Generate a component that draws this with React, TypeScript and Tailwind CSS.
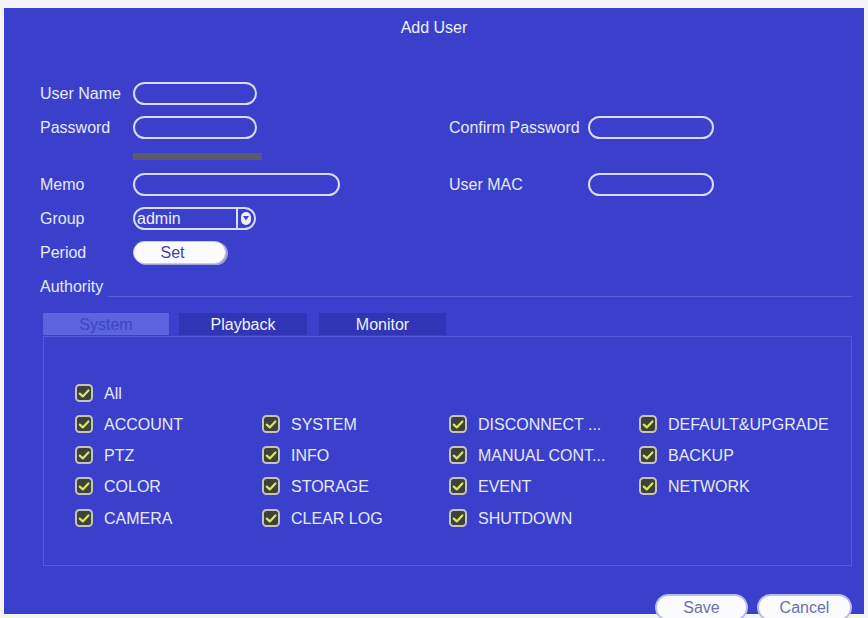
import React from "react";

const FONT = { fontFamily: '"Liberation Sans", Arial, sans-serif' };

const PERMISSIONS = [
  "ACCOUNT",
  "SYSTEM",
  "DISCONNECT ...",
  "DEFAULT&UPGRADE",
  "PTZ",
  "INFO",
  "MANUAL CONT...",
  "BACKUP",
  "COLOR",
  "STORAGE",
  "EVENT",
  "NETWORK",
  "CAMERA",
  "CLEAR LOG",
  "SHUTDOWN",
];

function CheckBox() {
  return (
    <svg width="18" height="18" viewBox="0 0 18 18" className="shrink-0">
      <rect x="1" y="1" width="16" height="16" rx="3.5" fill="#3e4338" stroke="#c4c4bc" strokeWidth="2" />
      <path d="M4.8 9.6 L7.8 12.4 L13.4 6.4" fill="none" stroke="#dbe46c" strokeWidth="2.2" strokeLinecap="round" strokeLinejoin="round" />
    </svg>
  );
}

function CheckItem({ label }: { label: string }) {
  return (
    <div className="flex h-[31.25px] items-center gap-[11px]">
      <CheckBox />
      <span className="pt-[2px] text-[16px] leading-none text-[#e6e8f6]">{label}</span>
    </div>
  );
}

function Field({ width }: { width: string }) {
  return <div className={`h-[23px] rounded-full border-2 border-[#d9dbf4] ${width}`} />;
}

function Label({ children, width }: { children: React.ReactNode; width: string }) {
  return <span className={`${width} shrink-0 pt-[2px] text-[16px] leading-none text-[#e6e8f6]`}>{children}</span>;
}

export default function App() {
  return (
    <div className="h-[618px] w-[868px] overflow-hidden bg-[#f3f3f7] pl-[4px] pt-[8px]" style={FONT}>
      <div className="h-[606px] w-[860px] bg-[#3a40cc]">
        <div className="flex h-[38px] items-center justify-center pt-[2px] text-[16px] leading-none text-[#eef0fb]">Add User</div>

        <div className="mt-[30px] flex flex-col pl-[36px] pr-[12px]">
          <div className="flex h-[34px] items-center">
            <Label width="w-[93px]">User Name</Label>
            <Field width="w-[124px]" />
          </div>

          <div className="flex h-[34px] items-center">
            <div className="flex w-[409px] items-center">
              <Label width="w-[93px]">Password</Label>
              <Field width="w-[124px]" />
            </div>
            <Label width="w-[139px]">Confirm Password</Label>
            <Field width="w-[126px]" />
          </div>

          <div className="h-[23px] pl-[93px] pt-[9px]">
            <div className="h-[7px] w-[129px] bg-[#5d596f]" />
          </div>

          <div className="flex h-[34px] items-center">
            <div className="flex w-[409px] items-center">
              <Label width="w-[93px]">Memo</Label>
              <Field width="w-[207px]" />
            </div>
            <Label width="w-[139px]">User MAC</Label>
            <Field width="w-[126px]" />
          </div>

          <div className="flex h-[34px] items-center">
            <Label width="w-[93px]">Group</Label>
            <div className="flex h-[23px] w-[123px] items-center rounded-full border-2 border-[#d9dbf4]">
              <span className="flex-1 pl-[2px] pt-[1px] text-[16px] leading-none text-[#eef0fb]">admin</span>
              <div className="h-full w-[2px] bg-[#d9dbf4]" />
              <div className="mx-[3px] flex h-[13px] w-[10px] items-center justify-center rounded-full bg-[#eceef8]">
                <svg width="6" height="5" viewBox="0 0 6 5">
                  <path d="M0 0 H6 L3 4.5 Z" fill="#3a40cc" />
                </svg>
              </div>
            </div>
          </div>

          <div className="flex h-[34px] items-center">
            <Label width="w-[93px]">Period</Label>
            <button className="h-[23px] w-[93px] rounded-full border border-[#c9cbe4] bg-[#fbfbfe] pr-[14px] pt-[1px] text-[16px] leading-none text-[#3e44a6] shadow-[2px_1px_0_#9ea2d6]">
              Set
            </button>
          </div>

          <div className="flex h-[34px] items-center">
            <Label width="w-auto">Authority</Label>
            <div className="ml-[5px] mt-[20px] h-px flex-1 bg-[#5a61dd]" />
          </div>
        </div>

        <div className="ml-[39px] mt-[10px] flex h-[22px] text-[16px] leading-none">
          <div className="flex w-[126px] items-center justify-center bg-[#5b63df] pt-[1px] text-[#3d45c2]">System</div>
          <div className="ml-[10px] flex w-[128px] items-center justify-center bg-[#2f35b4] pt-[1px] text-[#eef0fb]">Playback</div>
          <div className="ml-[12px] flex w-[127px] items-center justify-center bg-[#2f35b4] pt-[1px] text-[#eef0fb]">Monitor</div>
        </div>

        <div className="ml-[39px] mt-px h-[230px] w-[809px] border border-[#5259da] pl-[31px] pt-[40px]">
          <CheckItem label="All" />
          <div className="grid grid-cols-[187px_187px_190px_1fr]">
            {PERMISSIONS.map((item) => (
              <CheckItem key={item} label={item} />
            ))}
          </div>
        </div>

        <div className="mr-[12px] mt-[28px] flex justify-end gap-[9px] text-[16px] leading-none">
          <button className="h-[27px] w-[93px] rounded-full border-2 border-[#b9bce6] bg-[#fbfbfe] pt-[1px] text-[#6a6fb0]">Save</button>
          <button className="h-[27px] w-[95px] rounded-full border-2 border-[#b9bce6] bg-[#fbfbfe] pt-[1px] text-[#6a6fb0]">Cancel</button>
        </div>
      </div>
    </div>
  );
}
